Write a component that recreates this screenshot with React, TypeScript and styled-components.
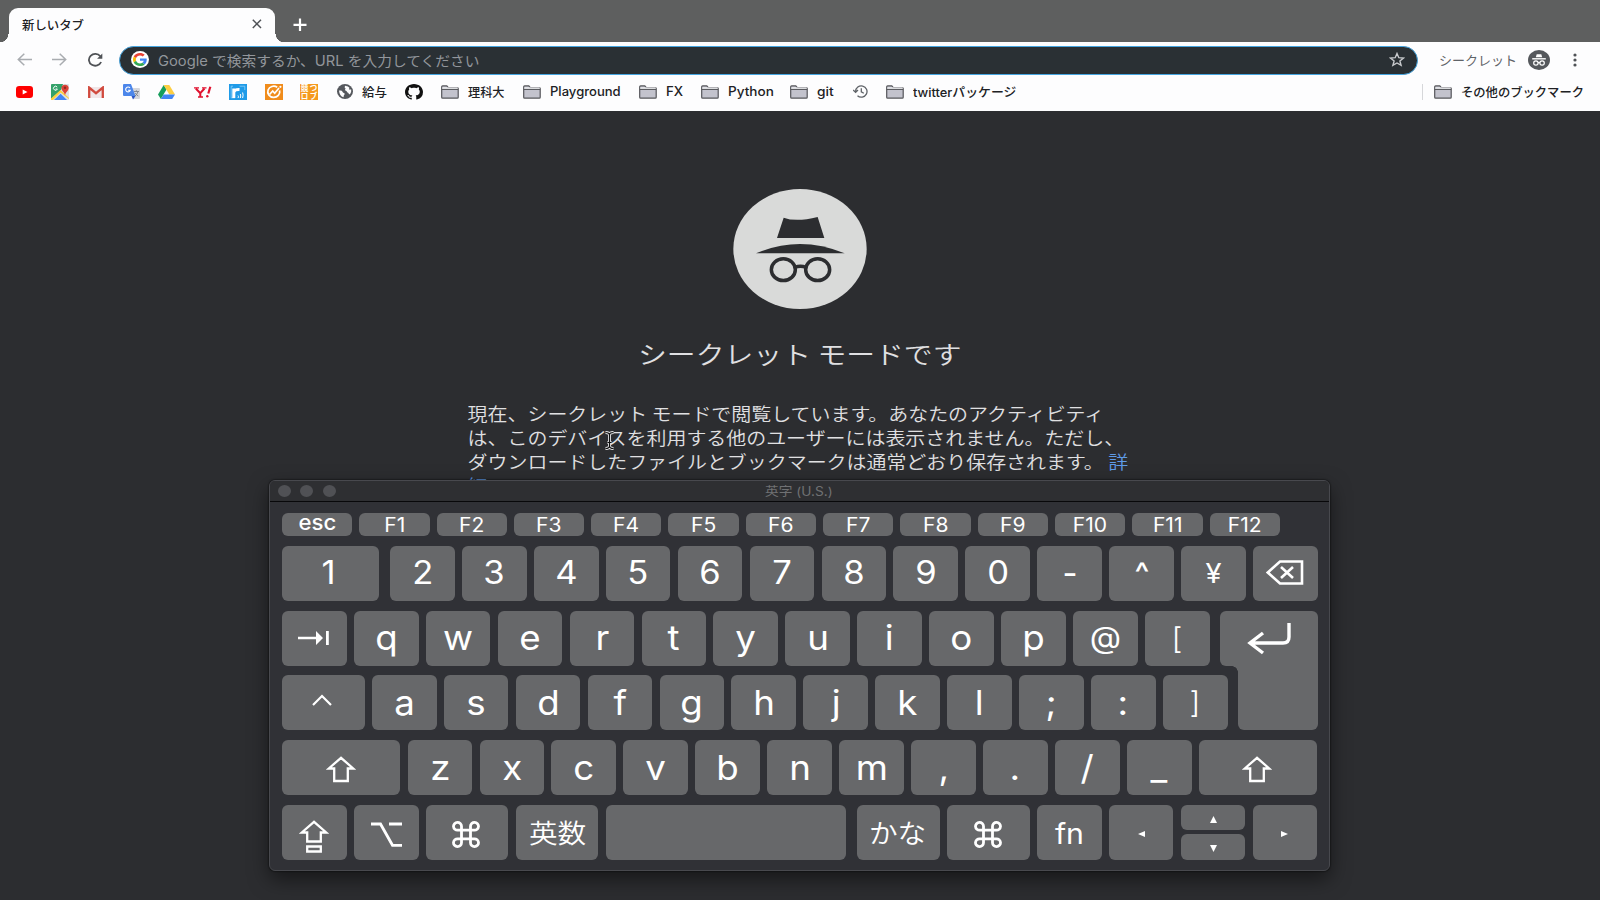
import React, { useLayoutEffect, useRef, useState } from "react";
import styled, { createGlobalStyle } from "styled-components";

const Global = createGlobalStyle`
  * { box-sizing: border-box; }
  body { margin: 0; background: #2c2d30; overflow: hidden; }
`;

const Page = styled.div`
  width: 1600px;
  height: 900px;
  display: flex;
  flex-direction: column;
  overflow: hidden;
  background: #2c2d30;
  font-family: Inter, "Noto Sans CJK JP", sans-serif;
  svg { display: block; flex: none; }
`;

/* Text squeezed or stretched to an exact width */
const FitBox = styled.span<{ $w: number }>`
  display: block;
  flex: none;
  width: ${(p) => p.$w}px;
  white-space: nowrap;
`;
const FitInner = styled.span`
  display: inline-block;
  transform-origin: 0 50%;
`;
function Fit({ w, children }: { w: number; children: string }) {
  const ref = useRef<HTMLSpanElement>(null);
  const [s, setS] = useState(1);
  useLayoutEffect(() => {
    if (ref.current) setS(w / ref.current.offsetWidth);
  }, [w, children]);
  return (
    <FitBox $w={w}>
      <FitInner ref={ref} style={{ transform: `scaleX(${s})` }}>{children}</FitInner>
    </FitBox>
  );
}

/* ---------- browser chrome ---------- */
const TabStrip = styled.div`
  height: 42px;
  display: flex;
  align-items: flex-end;
  background: #5e5f5f;
`;
const Tab = styled.div`
  position: relative;
  margin-left: 9px;
  width: 266px;
  height: 34px;
  padding: 0 13px 2px;
  display: flex;
  align-items: center;
  justify-content: space-between;
  border-radius: 9px 9px 0 0;
  background: #fdfdfe;
  color: #202124;
  font-size: 12px;
  font-weight: 500;
  &::before, &::after {
    content: "";
    position: absolute;
    bottom: 0;
    width: 9px;
    height: 8px;
  }
  &::before { left: -9px; background: radial-gradient(circle at 0 0, transparent 8px, #fdfdfe 8.5px); }
  &::after { right: -9px; background: radial-gradient(circle at 100% 0, transparent 8px, #fdfdfe 8.5px); }
`;
const NewTab = styled.div`
  height: 34px;
  margin-left: 18px;
  display: flex;
  align-items: center;
`;
const Toolbar = styled.div`
  height: 36px;
  display: flex;
  align-items: center;
  padding-left: 17px;
  background: #fdfdfe;
  color: #5f6368;
  font-size: 13px;
`;
const NavIcons = styled.div`
  width: 102px;
  display: flex;
  gap: 20px;
`;
const Omnibox = styled.div`
  width: 1299px;
  height: 29px;
  display: flex;
  align-items: center;
  padding: 0 12px 1px 11px;
  border: 1.5px solid #45a5e0;
  border-radius: 15px;
  background: #2a3034;
  color: #92969b;
  font-size: 14px;
`;
const GoogleBadge = styled.div`
  width: 18px;
  height: 17px;
  margin-right: 9px;
  border-radius: 50%;
  background: #fff;
  display: flex;
  align-items: center;
  justify-content: center;
`;
const Star = styled.div`margin-left: auto;`;
const Profile = styled.div`
  margin-left: 21px;
  padding-bottom: 1px;
  display: flex;
  align-items: center;
`;
const ProfileIcon = styled.div`margin-left: 11px;`;
const Menu = styled.div`margin-left: 23px;`;
const Bookmarks = styled.div`
  height: 32.5px;
  display: flex;
  align-items: center;
  padding: 0 0 5px 16px;
  background: #fdfdfe;
  color: #202124;
  font-size: 12.5px;
  font-weight: 500;
`;
const Bookmark = styled.div<{ $w: number; $gap?: number }>`
  width: ${(p) => p.$w}px;
  flex: none;
  display: flex;
  align-items: center;
  gap: ${(p) => p.$gap ?? 9}px;
`;
const OtherBookmarks = styled.div`
  margin-left: auto;
  width: 178px;
  height: 16px;
  padding-left: 11px;
  border-left: 1px solid #d6d7da;
  display: flex;
  align-items: center;
  gap: 9px;
`;

const Folder = () => (
  <svg width="18" height="14" viewBox="0 0 18 14">
    <path d="M.7 12.2V1.8q0-.9.9-.9h4.2l1.5 1.7h9q.9 0 .9.9v8.7q0 .9-.9.9H1.6q-.9 0-.9-.9z" fill="#c3c3cd" stroke="#55565a" strokeWidth="1.2" />
    <path d="M1.3 2.4h15.400v1.600H1.300z" fill="#f4f4f6" />
    <path d="M.7 4.4h16.5" stroke="#55565a" strokeWidth="1.1" />
  </svg>
);
const GoogleG = () => (
  <svg width="14" height="13" viewBox="0 0 48 48" preserveAspectRatio="none">
    <path fill="#EA4335" d="M24 9.5c3.54 0 6.71 1.22 9.21 3.6l6.85-6.85C35.9 2.38 30.47 0 24 0 14.62 0 6.51 5.38 2.56 13.22l7.98 6.19C12.43 13.72 17.74 9.5 24 9.5z" />
    <path fill="#4285F4" d="M46.98 24.55c0-1.57-.15-3.09-.38-4.55H24v9.02h12.94c-.58 2.96-2.26 5.48-4.78 7.18l7.73 6c4.51-4.18 7.09-10.36 7.09-17.65z" />
    <path fill="#FBBC05" d="M10.53 28.59c-.48-1.45-.76-2.99-.76-4.59s.27-3.14.76-4.59l-7.98-6.19C.92 16.46 0 20.12 0 24s.92 7.54 2.56 10.78l7.97-6.19z" />
    <path fill="#34A853" d="M24 48c6.48 0 11.93-2.13 15.89-5.81l-7.73-6c-2.15 1.45-4.92 2.3-8.16 2.3-6.26 0-11.57-4.22-13.47-9.91l-7.98 6.19C6.51 42.62 14.62 48 24 48z" />
  </svg>
);
const YouTube = () => (
  <svg width="17" height="12" viewBox="0 0 16 12" preserveAspectRatio="none"><rect width="16" height="12" rx="3" fill="#f00" /><path d="M6.3 3.4v5.2L10.8 6z" fill="#fff" /></svg>
);
const Maps = () => (
  <svg width="18" height="16" viewBox="0 0 18 16">
    <rect width="18" height="16" rx="1" fill="#dfe1e5" />
    <path d="M0 1q0-1 1-1h11L10 6 0 15z" fill="#34a26a" />
    <path d="M0 14.5 9.5 6 18 14v1L9.6 8.5 2 16H0z" fill="#fdd03b" />
    <path d="M3 16l6.6-6.3L16 16z" fill="#4285f4" />
    <path d="M14 11.5C13.6 8 10.4 7 10.4 3.8a3.7 3.7 0 0 1 7.3 0c0 3.2-3.2 4.2-3.7 7.7z" fill="#db4437" />
    <circle cx="14" cy="3.7" r="1.2" fill="#8a2a20" />
    <path d="M6.2 3.1A2 2 0 1 0 6.4 5H4.6" fill="none" stroke="#fff" strokeWidth="1" />
  </svg>
);
const Gmail = () => (
  <svg width="16" height="12" viewBox="0 0 16 12">
    <rect x="1" y="1" width="14" height="11" fill="#f1e6e8" />
    <path d="M1.2 12V1.6L8 7.2l6.8-5.6V12" fill="none" stroke="#d14a3e" strokeWidth="2.3" />
  </svg>
);
const Translate = () => (
  <svg width="17" height="16" viewBox="0 0 17 16">
    <path d="M7 4h9q1 0 1 1v9q0 1-1 1h-6z" fill="#d4d6dc" />
    <path d="M1 0h7l4.5 12H1q-1 0-1-1V1q0-1 1-1z" fill="#4c86ea" />
    <path d="M8.5 12h4L10 15.5z" fill="#2a56c6" />
    <path d="M7 4A2.4 2.4 0 1 0 7.3 6.3H5" fill="none" stroke="#fff" strokeWidth="1.1" />
    <path d="M11 7.5h5M13.4 6.3v1.2M15 7.6q-.8 3-3 4.4M12.3 9q1 2 3 3" fill="none" stroke="#7b8088" strokeWidth=".9" />
  </svg>
);
const Drive = () => (
  <svg width="17" height="14" viewBox="0 0 17 14">
    <path d="M5.7 0 0 9.5 2.8 14 8.5 4.6z" fill="#169d5c" />
    <path d="M5.7 0h5.6L17 9.5h-5.7z" fill="#fdce42" />
    <path d="M5.6 9.5H17L14.2 14H2.8z" fill="#4285f4" />
  </svg>
);
const YahooMark = () => (
  <svg width="18" height="12" viewBox="0 0 18 12" fill="none" stroke="#e0102e">
    <path d="M1.800 2.500 6.300 7.200M10.500 2.500 6.300 7.200V11" strokeWidth="2" />
    <path d="M0 1.900h5M8 1.900h4.500M4 11h5" strokeWidth="1.300" />
    <path d="M16.300.800 14.300 7.500" strokeWidth="2.200" />
    <circle cx="13.300" cy="10.300" r="1.200" fill="#e0102e" stroke="none" />
  </svg>
);
const BlueFeed = () => (
  <svg width="18" height="16" viewBox="0 0 18 16">
    <rect width="18" height="16" fill="#1f9be8" />
    <path d="M10.500 2.200H15.800V6M6 13.800H2.200V2.200H4" fill="none" stroke="#8fd0f7" strokeWidth=".8" />
    <path d="M4.800 14V4.500M4.800 8Q5.500 5.300 10.500 5.500" fill="none" stroke="#fff" strokeWidth="3" />
    <path d="M9 11.500a2 2 0 0 1 0 2.500M11.300 10a5 5 0 0 1 0 4M13.600 8.500a8 8 0 0 1 0 5.500" fill="none" stroke="#fff" strokeWidth="1" />
  </svg>
);
const OrangeChart = () => (
  <svg width="18" height="16" viewBox="0 0 18 16">
    <rect width="18" height="16" fill="#f08c1c" />
    <path d="M14.6 6.5A6 5.6 0 1 1 12.2 3.2" fill="none" stroke="#fff" strokeWidth="1.7" />
    <path d="M4.5 10.5 7.7 7l2 2.3L14 4" fill="none" stroke="#fff" strokeWidth="1.7" />
    <circle cx="15.4" cy="2.8" r="1.1" fill="#fff" />
  </svg>
);
const StampBox = styled.span`
  width: 18px;
  height: 16px;
  display: grid;
  grid-template-columns: 1fr 1fr;
  grid-template-rows: 8px 8px;
  place-items: center;
  background: #f59a1e;
  color: #fff;
  font: 700 7.5px/8px "Noto Sans CJK JP", sans-serif;
`;
const Globe = () => (
  <svg width="16" height="15" viewBox="0 0 16 15">
    <ellipse cx="8" cy="7.5" rx="8" ry="7.4" fill="#55585d" />
    <path d="M2 6.5q3-.5 3.5 1.2.3 1.3 1.8 1.3 1 1.2-.4 2.3l-.4 1.9Q2.5 12.300 2 6.500zM8 1.700q3.600.2 4.600 2.300-1 .6-.6 1.500h2.200q.4 3-1.200 4.800-1.500.3-1.500-1.400-1.600-.5-2-1.900-1.500-.3-1.600-1.500L9 4.800q-1.800-.3-1-3.100z" fill="#fdfdfe" />
  </svg>
);
const GitHub = () => (
  <svg width="18" height="16" viewBox="0 0 16 16" preserveAspectRatio="none">
    <path fill="#111" d="M8 0C3.58 0 0 3.58 0 8c0 3.54 2.29 6.53 5.47 7.59.4.07.55-.17.55-.38 0-.19-.01-.82-.01-1.49-2.01.37-2.53-.49-2.69-.94-.09-.23-.48-.94-.82-1.130-.28-.15-.68-.52-.01-.53.63-.01 1.080.58 1.230.82.720 1.210 1.870.870 2.330.660.070-.52.280-.87.510-1.070-1.780-.2-3.640-.89-3.640-3.950 0-.87.310-1.590.820-2.150-.08-.2-.36-1.020.080-2.120 0 0 .67-.21 2.200.820.640-.18 1.320-.27 2-.27s1.360.090 2 .270c1.530-1.040 2.200-.820 2.200-.820.440 1.100.160 1.920.080 2.120.510.560.820 1.270.820 2.150 0 3.070-1.870 3.750-3.650 3.950.290.250.540.730.540 1.480 0 1.070-.010 1.930-.010 2.200 0 .210.150.460.550.380A8.010 8.010 0 0 0 16 8c0-4.420-3.580-8-8-8z" />
  </svg>
);
const History = () => (
  <svg width="15" height="13" viewBox="0 0 15 13" fill="none" stroke="#5f6368" strokeWidth="1.3">
    <path d="M2.600 6.500A5.700 5.600 0 1 1 4.500 10.700M.2 5l2.400 2.400L5 5M8.300 3.300v3.500l2.500 1.500" />
  </svg>
);
const SmallIncognito = () => (
  <svg width="22" height="20" viewBox="0 0 22 20">
    <ellipse cx="11" cy="10" rx="11" ry="10" fill="#55585c" />
    <path d="M7.800 7.300 8.700 4.200h4.600l.9 3.100z" fill="#fff" />
    <path d="M4.200 8.800h13.600" stroke="#fff" strokeWidth="1.400" />
    <g fill="none" stroke="#fff" strokeWidth="1.200"><circle cx="7.900" cy="13" r="2.200" /><circle cx="14.100" cy="13" r="2.200" /><path d="M10.100 12.600h1.800" /></g>
  </svg>
);

/* ---------- incognito page ---------- */
const Content = styled.main`
  flex: 1;
  display: flex;
  flex-direction: column;
  align-items: center;
  padding-top: 78.500px;
  color: #e0e0e2;
  font-family: "Noto Sans CJK JP", sans-serif;
`;
const Heading = styled.h1`
  margin: 25px 0 0;
  height: 38px;
  font-size: 25px;
  line-height: 38px;
  font-weight: 350;
`;
const Copy = styled.p`
  width: 600px;
  margin: 29px 0 0;
  font-size: 18px;
  line-height: 24px;
  font-weight: 350;
  white-space: nowrap;
  transform: scaleX(1.108);
  transform-origin: 50% 0;
  a { color: #5f9be8; }
`;
const IncognitoArt = () => (
  <svg width="134" height="120" viewBox="99 56 402 360">
    <ellipse cx="300" cy="236" rx="200" ry="180" fill="#d9dad9" />
    <g fill="#2c2d30">
      <path d="M251 142q37 14 102-2l20 63H231z" />
      <path d="M168 249q66-28 132-28t134 28z" />
    </g>
    <g fill="none" stroke="#2c2d30" strokeWidth="10.500">
      <ellipse cx="250" cy="298" rx="36" ry="32.500" />
      <ellipse cx="353" cy="298" rx="36" ry="32.500" />
      <path d="M285 291q16-6 33 0" />
    </g>
  </svg>
);

/* ---------- on-screen keyboard ---------- */
const Keyboard = styled.section`
  position: absolute;
  left: 269px;
  top: 480px;
  width: 1061px;
  height: 391px;
  border: 1px solid #48494e;
  border-radius: 6px;
  background: #303136;
  box-shadow: 0 8px 20px rgba(0, 0, 0, 0.5), 0 0 2px #000;
  color: #fff;
  overflow: visible;
`;
const TitleBar = styled.header`
  height: 21px;
  padding: 0 8px;
  display: flex;
  align-items: center;
  gap: 9.300px;
  border-radius: 5px 5px 0 0;
  border-bottom: 1px solid #08080a;
  background: #2e2f32;
`;
const Light = styled.span`
  width: 13px;
  height: 12px;
  border-radius: 50%;
  background: #505155;
`;
const Title = styled.div`
  margin-left: 420.500px;
  padding-bottom: 1px;
  font-size: 12.500px;
  color: #707173;
`;
const Keys = styled.div`
  padding: 11.300px 0 0 11.900px;
  display: flex;
  flex-direction: column;
  gap: 9.700px;
`;
const Row = styled.div`
  display: flex;
  gap: 7.240px;
`;
const FnRow = styled(Row)`gap: 7.030px;`;
const Key = styled.div<{ $w?: number; $h?: number; $after?: number; $size?: number; $up?: number; $down?: number; $left?: number; $weight?: number }>`
  width: ${(p) => p.$w ?? 64.7}px;
  height: ${(p) => p.$h ?? 55}px;
  margin-right: ${(p) => p.$after ?? 0}px;
  padding-bottom: ${(p) => p.$up ?? 0}px;
  padding-top: ${(p) => p.$down ?? 0}px;
  padding-right: ${(p) => p.$left ?? 0}px;
  flex: none;
  display: flex;
  align-items: center;
  justify-content: center;
  border-radius: 6px;
  background: #67686a;
  font-size: ${(p) => p.$size ?? 34}px;
  font-weight: ${(p) => p.$weight ?? 400};
  line-height: 1;
`;
const Cap = styled.span`
  display: block;
  white-space: nowrap;
  transform: scaleX(1.08);
`;
const DoubleRow = styled.div`display: flex;`;
const Stack = styled.div<{ $gap: number }>`
  width: 946.800px;
  flex: none;
  display: flex;
  flex-direction: column;
  gap: ${(p) => p.$gap}px;
`;
const Arrows = styled(Stack)`width: 64.700px;`;
const ReturnKey = styled.div`
  margin-left: -8.700px;
  width: 97.600px;
  display: flex;
  flex-direction: column;
  align-items: flex-end;
`;
const ReturnTop = styled(Key)`border-radius: 6px 6px 0 6px;`;
const ReturnBottom = styled(Key)`
  position: relative;
  border-radius: 0 0 6px 6px;
  &::before {
    content: "";
    position: absolute;
    left: -6px;
    top: 0;
    width: 6px;
    height: 6px;
    background: radial-gradient(circle at 0 100%, transparent 5.500px, #67686a 6px);
  }
`;

type IconProps = { w: number; h: number; d: string; sw?: number; fill?: string };
const Glyph = ({ w, h, d, sw = 2.3, fill = "none" }: IconProps) => (
  <svg width={w} height={h} viewBox={`0 0 ${w} ${h}`} fill={fill} stroke={sw ? "#fff" : "none"} strokeWidth={sw}>
    <path d={d} />
  </svg>
);
const SHIFT = "M15 1.800 2.800 12.500H8.200V25H21.800V12.500H27.200z";
const CMD = "M9.500 9.200H18.500V17.800H9.500zM9.500 9.200H5.800A4 3.900 0 1 1 9.500 5.300zM18.500 9.200V5.300A4 3.900 0 1 1 22.200 9.200zM18.500 17.800H22.200A4 3.900 0 1 1 18.500 21.700zM9.500 17.800V21.700A4 3.900 0 1 1 5.800 17.800z";

const num = ["2", "3", "4", "5", "6", "7", "8", "9", "0"];
const top = ["q", "w", "e", "r", "t", "y", "u", "i", "o", "p"];
const home = ["a", "s", "d", "f", "g", "h", "j", "k", "l"];
const low = ["z", "x", "c", "v", "b", "n", "m", ",", ".", "/", "_"];

const CARET = "M1.500 1.500Q5.500 1.500 5.500 4Q5.500 1.500 9.500 1.500M5.500 4V15M1.500 17.500Q5.500 17.500 5.500 15Q5.500 17.500 9.500 17.500M3.500 11.500H7.500";
const Caret = styled.svg`
  position: absolute;
  left: 604px;
  top: 431px;
`;

export default function App() {
  return (
    <Page>
      <Global />
      <TabStrip>
        <Tab>
          <Fit w={62}>新しいタブ</Fit>
          <svg width="10" height="10" viewBox="0 0 10 10"><path d="M.800.800 9 9M9 .800.800 9" stroke="#4f5256" strokeWidth="1.500" /></svg>
        </Tab>
        <NewTab>
          <svg width="14" height="14" viewBox="0 0 14 14"><path d="M7 .500v12.500M.500 6.800h13" stroke="#fff" strokeWidth="2.200" /></svg>
        </NewTab>
      </TabStrip>
      <Toolbar>
        <NavIcons>
          <svg width="15" height="13" viewBox="0 0 15 13" fill="none" stroke="#a9acb0" strokeWidth="1.500"><path d="M15 6.500H1.500M7.300.800 1.300 6.500l6 5.700" /></svg>
          <svg width="15" height="13" viewBox="0 0 15 13" fill="none" stroke="#a9acb0" strokeWidth="1.500"><path d="M0 6.500h13.500M7.700.800l6 5.700-6 5.700" /></svg>
          <svg width="17" height="14" viewBox="0 0 16 14" fill="none" stroke="#4f5256" strokeWidth="1.800"><path d="M13.600 9A6.300 5.900 0 1 1 12.800 3.300" /><path d="M14.800.500v5.200H9.600z" fill="#4f5256" stroke="none" /></svg>
        </NavIcons>
        <Omnibox>
          <GoogleBadge><GoogleG /></GoogleBadge>
          <Fit w={321}>Google で検索するか、URL を入力してください</Fit>
          <Star>
            <svg width="16" height="15" viewBox="0 0 16 15" fill="none" stroke="#c8cacd" strokeWidth="1.400"><path d="M8 1.500 9.800 5.700l4.700.3-3.600 2.900 1.200 4.500L8 11l-4.100 2.400 1.200-4.500L1.500 6l4.700-.3z" /></svg>
          </Star>
        </Omnibox>
        <Profile>
          <Fit w={78}>シークレット</Fit>
          <ProfileIcon><SmallIncognito /></ProfileIcon>
          <Menu><svg width="4" height="14" viewBox="0 0 4 14" fill="#4f5256"><circle cx="2" cy="2" r="1.600" /><circle cx="2" cy="7" r="1.600" /><circle cx="2" cy="12" r="1.600" /></svg></Menu>
        </Profile>
      </Toolbar>
      <Bookmarks>
        <Bookmark $w={35}><YouTube /></Bookmark>
        <Bookmark $w={36.500}><Maps /></Bookmark>
        <Bookmark $w={35}><Gmail /></Bookmark>
        <Bookmark $w={35.500}><Translate /></Bookmark>
        <Bookmark $w={35.5}><Drive /></Bookmark>
        <Bookmark $w={35.5}><YahooMark /></Bookmark>
        <Bookmark $w={35.5}><BlueFeed /></Bookmark>
        <Bookmark $w={35.5}><OrangeChart /></Bookmark>
        <Bookmark $w={36.500}><StampBox><span>競</span><span>つ</span><span>ロ</span><span>ブ</span></StampBox></Bookmark>
        <Bookmark $w={68.5} $gap={9.500}><Globe /><Fit w={25}>給与</Fit></Bookmark>
        <Bookmark $w={36}><GitHub /></Bookmark>
        <Bookmark $w={82}><Folder /><Fit w={37}>理科大</Fit></Bookmark>
        <Bookmark $w={116}><Folder /><Fit w={71}>Playground</Fit></Bookmark>
        <Bookmark $w={62}><Folder /><Fit w={17}>FX</Fit></Bookmark>
        <Bookmark $w={89}><Folder /><Fit w={45.5}>Python</Fit></Bookmark>
        <Bookmark $w={63}><Folder /><Fit w={16.5}>git</Fit></Bookmark>
        <Bookmark $w={33}><History /></Bookmark>
        <Bookmark $w={140}><Folder /><Fit w={103}>twitterパッケージ</Fit></Bookmark>
        <OtherBookmarks><Folder /><Fit w={123}>その他のブックマーク</Fit></OtherBookmarks>
      </Bookmarks>
      <Content>
        <IncognitoArt />
        <Heading><Fit w={324}>シークレット モードです</Fit></Heading>
        <Copy>
          現在、シークレット モードで閲覧しています。あなたのアクティビティ<br />
          は、このデバイスを利用する他のユーザーには表示されません。ただし、<br />
          ダウンロードしたファイルとブックマークは通常どおり保存されます。 <a>詳<br />細</a>
        </Copy>
      </Content>
      <Keyboard>
        <TitleBar>
          <Light /><Light /><Light />
          <Title><Fit w={68}>英字 (U.S.)</Fit></Title>
        </TitleBar>
        <Keys>
          <FnRow>
            <Key $w={70.3} $h={23} $size={20.500} $up={3} $weight={450}><Cap>esc</Cap></Key>
            {Array.from({ length: 12 }, (_, i) => (
              <Key key={i} $w={70.3} $h={23} $size={19.500} $down={1.500}><Cap>{`F${i + 1}`}</Cap></Key>
            ))}
          </FnRow>
          <Row>
            <Key $w={97.6} $after={3.3} $size={32} $up={1} $left={5}><Cap>1</Cap></Key>
            {num.map((c) => <Key key={c} $size={32} $up={1}><Cap>{c}</Cap></Key>)}
            <Key $size={30} $weight={500}><Cap>-</Cap></Key>
            <Key $size={29} $up={2} $weight={500}><Cap>^</Cap></Key>
            <Key $size={27}><Cap>¥</Cap></Key>
            <Key $up={2}><Glyph w={38} h={25} d="M1.800 12.500 14 1.500H36V23.500H14zM15 7 27 18M27 7 15 18" sw={2.6} /></Key>
          </Row>
          <DoubleRow>
            <Stack $gap={9.7}>
              <Row>
                <Key $up={1}>
                  <svg width="32" height="16" viewBox="0 0 32 16" fill="#fff"><path d="M0 6.700H18V1L25 8l-7 7V9.300H0zM28 1h2.800v14H28z" /></svg>
                </Key>
                {top.map((c) => <Key key={c}><Cap>{c}</Cap></Key>)}
                <Key $size={30} $up={2}><Cap>@</Cap></Key>
                <Key $size={29} $weight={350}><Cap>[</Cap></Key>
              </Row>
              <Row>
                <Key $w={82.7} $up={6} $left={3}><Glyph w={20} h={12} d="M1 11 10 2 19 11" sw={2.2} /></Key>
                {home.map((c) => <Key key={c}><Cap>{c}</Cap></Key>)}
                <Key><Cap>;</Cap></Key>
                <Key><Cap>:</Cap></Key>
                <Key $size={29} $weight={350} $up={1}><Cap>]</Cap></Key>
              </Row>
            </Stack>
            <ReturnKey>
              <ReturnTop $w={97.6} $down={2}>
                <svg width="44" height="34" viewBox="0 0 44 34" fill="none" stroke="#fff" strokeWidth="3.400"><path d="M42 1V15Q42 21 36 21H3M16 11 3 21 16 31" /></svg>
              </ReturnTop>
              <ReturnBottom $w={79.3} $h={64.7} />
            </ReturnKey>
          </DoubleRow>
          <Row>
            <Key $w={118.6} $after={-0.1} $down={3} $up={0}><Glyph w={30} h={27} d={SHIFT} /></Key>
            {low.map((c) => <Key key={c}><Cap>{c}</Cap></Key>)}
            <Key $w={118.6} $down={3} $left={3}><Glyph w={30} h={27} d={SHIFT} /></Key>
          </Row>
          <Row>
            <Key $down={10}><svg width="30" height="34" viewBox="0 0 30 34" fill="none" stroke="#fff" strokeWidth="2.300"><path d="M15 1.800 2.800 12.500H8.200V21.500H21.800V12.500H27.200zM8.200 26.500H21.800V31.500H8.200z" /></svg></Key>
            <Key $down={4}><Glyph w={31} h={25} d="M0 2H9.500L21.500 23.300H31M18 2H31" sw={2.8} /></Key>
            <Key $w={82.7} $down={4} $left={3}><Glyph w={28} h={27} d={CMD} sw={2.800} /></Key>
            <Key $w={82.7} $size={26.500} $weight={350} $down={3}><Cap>英数</Cap></Key>
            <Key $w={240.700} $after={3.500} />
            <Key $w={82.700} $size={26.500} $weight={350} $down={3} $left={2}><Cap>かな</Cap></Key>
            <Key $w={82.700} $down={4}><Glyph w={28} h={27} d={CMD} sw={2.800} /></Key>
            <Key $size={28} $down={4}><Cap>fn</Cap></Key>
            <Key $down={3}><Glyph w={7} h={6} d="M0 3 7 0V6z" sw={0} fill="#fff" /></Key>
            <Arrows $gap={4}>
              <Key $h={25.500} $down={4}><Glyph w={7} h={7} d="M3.500 0 7 7H0z" sw={0} fill="#fff" /></Key>
              <Key $h={25.500} $down={4}><Glyph w={7} h={7} d="M3.500 7 7 0H0z" sw={0} fill="#fff" /></Key>
            </Arrows>
            <Key $down={3}><Glyph w={7} h={6} d="M7 3 0 0V6z" sw={0} fill="#fff" /></Key>
          </Row>
        </Keys>
      </Keyboard>
      <Caret width="11" height="19" viewBox="0 0 11 19" fill="none">
        <path d={CARET} stroke="#e8e8ea" strokeWidth="3" />
        <path d={CARET} stroke="#111" strokeWidth="1.200" />
      </Caret>
    </Page>
  );
}
